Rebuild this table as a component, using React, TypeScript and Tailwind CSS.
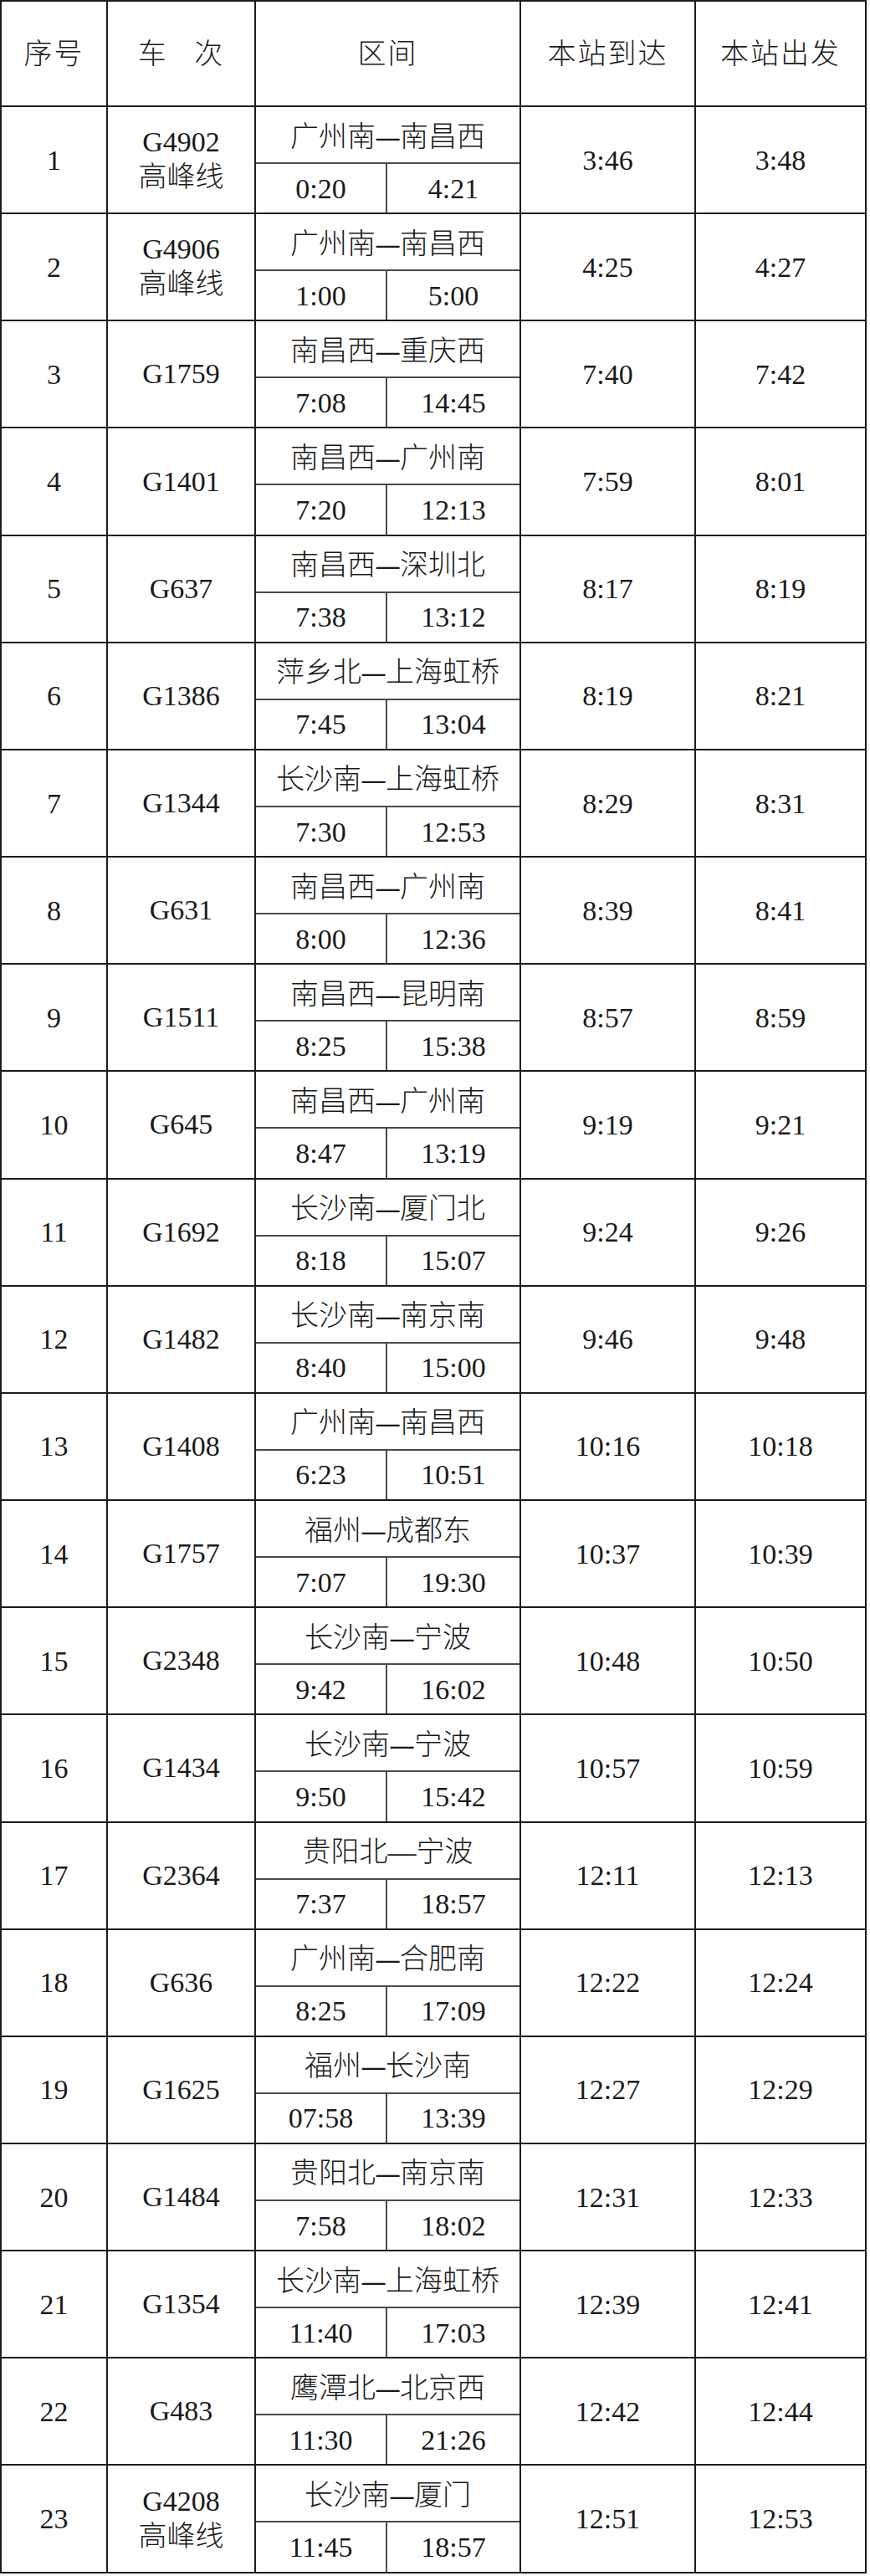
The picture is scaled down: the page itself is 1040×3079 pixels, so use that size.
import React from 'react';

/* ── Data ────────────────────────────────────────────────────────── */

type Train = {
    no: string;
    code: string;
    peak?: boolean;
    route: string;
    from: string;
    to: string;
    arrive: string;
    depart: string;
};

const trains: Train[] = [
    { no: '1', code: 'G4902', peak: true, route: '广州南–南昌西', from: '0:20', to: '4:21', arrive: '3:46', depart: '3:48' },
    { no: '2', code: 'G4906', peak: true, route: '广州南–南昌西', from: '1:00', to: '5:00', arrive: '4:25', depart: '4:27' },
    { no: '3', code: 'G1759', route: '南昌西–重庆西', from: '7:08', to: '14:45', arrive: '7:40', depart: '7:42' },
    { no: '4', code: 'G1401', route: '南昌西–广州南', from: '7:20', to: '12:13', arrive: '7:59', depart: '8:01' },
    { no: '5', code: 'G637', route: '南昌西–深圳北', from: '7:38', to: '13:12', arrive: '8:17', depart: '8:19' },
    { no: '6', code: 'G1386', route: '萍乡北–上海虹桥', from: '7:45', to: '13:04', arrive: '8:19', depart: '8:21' },
    { no: '7', code: 'G1344', route: '长沙南–上海虹桥', from: '7:30', to: '12:53', arrive: '8:29', depart: '8:31' },
    { no: '8', code: 'G631', route: '南昌西–广州南', from: '8:00', to: '12:36', arrive: '8:39', depart: '8:41' },
    { no: '9', code: 'G1511', route: '南昌西–昆明南', from: '8:25', to: '15:38', arrive: '8:57', depart: '8:59' },
    { no: '10', code: 'G645', route: '南昌西–广州南', from: '8:47', to: '13:19', arrive: '9:19', depart: '9:21' },
    { no: '11', code: 'G1692', route: '长沙南–厦门北', from: '8:18', to: '15:07', arrive: '9:24', depart: '9:26' },
    { no: '12', code: 'G1482', route: '长沙南–南京南', from: '8:40', to: '15:00', arrive: '9:46', depart: '9:48' },
    { no: '13', code: 'G1408', route: '广州南–南昌西', from: '6:23', to: '10:51', arrive: '10:16', depart: '10:18' },
    { no: '14', code: 'G1757', route: '福州–成都东', from: '7:07', to: '19:30', arrive: '10:37', depart: '10:39' },
    { no: '15', code: 'G2348', route: '长沙南–宁波', from: '9:42', to: '16:02', arrive: '10:48', depart: '10:50' },
    { no: '16', code: 'G1434', route: '长沙南–宁波', from: '9:50', to: '15:42', arrive: '10:57', depart: '10:59' },
    { no: '17', code: 'G2364', route: '贵阳北—宁波', from: '7:37', to: '18:57', arrive: '12:11', depart: '12:13' },
    { no: '18', code: 'G636', route: '广州南–合肥南', from: '8:25', to: '17:09', arrive: '12:22', depart: '12:24' },
    { no: '19', code: 'G1625', route: '福州–长沙南', from: '07:58', to: '13:39', arrive: '12:27', depart: '12:29' },
    { no: '20', code: 'G1484', route: '贵阳北–南京南', from: '7:58', to: '18:02', arrive: '12:31', depart: '12:33' },
    { no: '21', code: 'G1354', route: '长沙南–上海虹桥', from: '11:40', to: '17:03', arrive: '12:39', depart: '12:41' },
    { no: '22', code: 'G483', route: '鹰潭北–北京西', from: '11:30', to: '21:26', arrive: '12:42', depart: '12:44' },
    { no: '23', code: 'G4208', peak: true, route: '长沙南–厦门', from: '11:45', to: '18:57', arrive: '12:51', depart: '12:53' },
];

const cols = 'grid grid-cols-[127px_177px_317px_209px_202px]';
const cell = 'flex items-center justify-center border-r-2 border-[#1c1c1c]';

/* ── Route (the short dash is drawn wider, like the Song face) ───── */

function Route({ text }: { text: string }) {
    const parts = text.split('–');
    if (parts.length < 2) return <span>{text}</span>;
    return (
        <span className="flex items-center">
            <span>{parts[0]}</span>
            <span className="mx-[6px] inline-block scale-x-[1.6] font-bold">–</span>
            <span>{parts[1]}</span>
        </span>
    );
}

/* ── Row ─────────────────────────────────────────────────────────── */

function TrainRow({ t }: { t: Train }) {
    return (
        <div className={`${cols} h-[128.17px] border-b-2 border-[#1c1c1c]`}>
            <div className={cell}>{t.no}</div>
            <div className={`${cell} flex-col leading-[42px]`}>
                <span>{t.code}</span>
                {t.peak && <span>高峰线</span>}
            </div>
            <div className="flex flex-col border-r-2 border-[#1c1c1c]">
                <div className="flex h-[68px] items-center justify-center border-b-2 border-[#4a4a4a] pt-1">
                    <Route text={t.route} />
                </div>
                <div className="grid flex-1 grid-cols-[157px_1fr]">
                    <div className="flex items-center justify-center border-r-2 border-[#4a4a4a]">{t.from}</div>
                    <div className="flex items-center justify-center">{t.to}</div>
                </div>
            </div>
            <div className={cell}>{t.arrive}</div>
            <div className="flex items-center justify-center">{t.depart}</div>
        </div>
    );
}

/* ── Page ────────────────────────────────────────────────────────── */

export default function App() {
    return (
        <div className="min-h-[3079px] bg-white">
            <div className="w-[1036px] border-l-2 border-r-2 border-t-2 border-[#1c1c1c] font-['Liberation_Serif','Noto_Sans_CJK_SC',serif] text-[34px] font-light text-[#1a1a1a]">
                <div className={`${cols} h-[126px] border-b-2 border-[#1c1c1c] tracking-[2px]`}>
                    <div className={cell}>序号</div>
                    <div className={`${cell} whitespace-pre`}>车   次</div>
                    <div className={cell}>区间</div>
                    <div className={cell}>本站到达</div>
                    <div className="flex items-center justify-center">本站出发</div>
                </div>
                {trains.map((t) => (
                    <TrainRow key={t.no} t={t} />
                ))}
            </div>
        </div>
    );
}
